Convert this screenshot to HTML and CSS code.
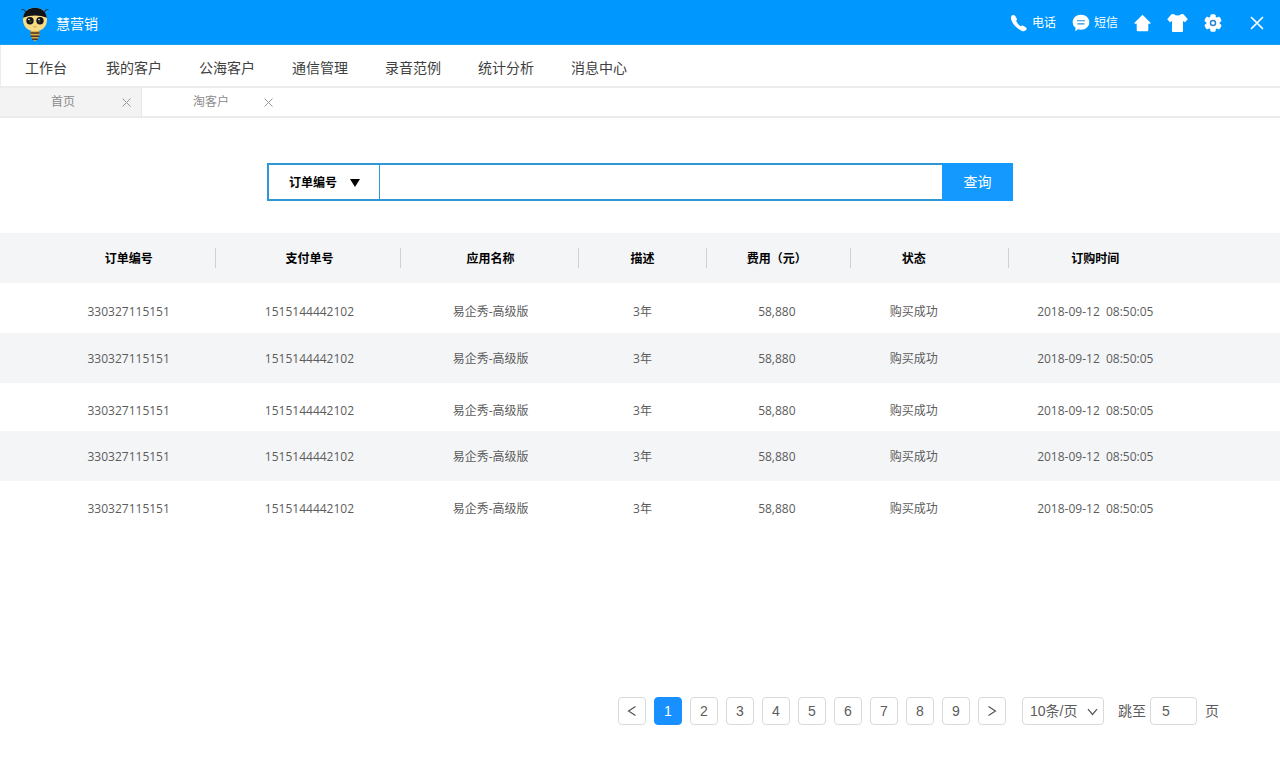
FILE: index.html
```html
<!DOCTYPE html>
<html lang="zh-CN">
<head>
<meta charset="utf-8">
<meta name="viewport" content="width=device-width, initial-scale=1">
<title>慧营销</title>
<link rel="stylesheet" href="styles.css">
</head>
<body>
<header class="topbar">
  <a class="brand" href="#">
    <svg class="brand-logo" viewBox="0 0 28 36" aria-hidden="true">
      <path d="M5 7Q3.500 2.500.8 3.800M23 7Q24.500 2.500 27.200 3.800" fill="none" stroke="#26405a" stroke-width="1.100" stroke-linecap="round"/>
      <path d="M10.200 23h7.600l.9 4q-.4 5-4.700 8.500q-4.300-3.500-4.700-8.500z" fill="#e0a83c"/>
      <path d="M9.500 27h9M9.700 30.200h8.600M11.200 33.200h5.600" stroke="#4a3424" stroke-width="1.400"/>
      <path d="M14 1.800c7 0 12 4.700 12 12C26 21 21 25.200 14 25.200S2 21 2 13.800C2 6.500 7 1.800 14 1.800z" fill="#f8dc84"/>
      <path d="M14 1.800c6.400 0 11.200 3.800 11.900 10Q20.500 9.600 14 9.600Q7.500 9.600 2.100 11.800C2.800 5.600 7.600 1.800 14 1.800z" fill="#111318"/>
      <circle cx="9" cy="14.800" r="3.700" fill="#15161b"/>
      <circle cx="19" cy="14.800" r="3.700" fill="#15161b"/>
      <circle cx="9.500" cy="15.500" r="1.100" fill="#54402f"/>
      <circle cx="18.500" cy="15.500" r="1.100" fill="#54402f"/>
      <circle cx="8" cy="13.500" r=".8" fill="#fff"/>
      <circle cx="18" cy="13.500" r=".8" fill="#fff"/>
      <path d="M12.500 20.500q1.500 1.200 3 0" fill="none" stroke="#b98a45" stroke-width=".8"/>
    </svg>
    <span>慧营销</span>
  </a>
  <div class="tools">
    <button class="tool" type="button">
      <svg width="18" height="18" viewBox="0 0 18 18" aria-hidden="true"><path d="M2.200 1.300C3.300.6 4.500.8 5.200 1.900L6.700 4.400C7.200 5.300 7 6 6.200 6.800C6.600 8.700 8.900 11.300 10.800 12.200C11.700 11.400 12.400 11.300 13.300 11.800L15.700 13.200C16.900 13.900 17 15.100 16.100 16.100C14.900 17.400 13.200 17.500 11.500 16.700C6.800 14.700 2.900 10.500 1.300 6C.6 4 .9 2.200 2.200 1.300z" fill="#fff"/></svg>
      <span>电话</span>
    </button>
    <button class="tool" type="button">
      <svg width="18" height="18" viewBox="0 0 18 18" aria-hidden="true"><path d="M9 .8c4.800 0 8.300 3.100 8.300 7.400s-3.500 7.500-8.300 7.500c-1 0-2-.1-2.900-.4L3.200 17.300l.4-3.500C1.800 12.500.7 10.500.7 8.200.7 3.900 4.200.8 9 .8z" fill="#fff"/><path d="M5 6.700h8M5.500 9.900h7" stroke="#2a8fdd" stroke-width="1.100"/></svg>
      <span>短信</span>
    </button>
    <button class="tool" type="button" aria-label="主页">
      <svg width="17" height="18" viewBox="0 0 17 18" aria-hidden="true"><path d="M8.500.8L16.500 8.700q.4.900-.5 1H14.300V16q0 1.200-1.200 1.200H3.900Q2.700 17.200 2.700 16V9.700H1q-.9-.1-.5-1z" fill="#fff"/></svg>
    </button>
    <button class="tool" type="button" aria-label="换肤">
      <svg width="21" height="20" viewBox="0 0 21 20" aria-hidden="true"><path d="M6.500 1Q10.500 4 14.500 1L16.500 1.300L20.800 6.300L18 9.300L16 8V18Q16 19 15 19H6Q5 19 5 18V8L3 9.300L.2 6.300L4.500 1.300z" fill="#fff"/></svg>
    </button>
    <button class="tool" type="button" aria-label="设置">
      <svg width="18" height="18" viewBox="0 0 18 18" aria-hidden="true"><g fill="#fff"><circle cx="9" cy="9" r="6.700"/><rect x="6.300" y=".2" width="5.400" height="17.600" rx="1.500"/><rect x="6.300" y=".2" width="5.400" height="17.600" rx="1.500" transform="rotate(60 9 9)"/><rect x="6.300" y=".2" width="5.400" height="17.600" rx="1.500" transform="rotate(120 9 9)"/></g><circle cx="9" cy="9" r="2.500" fill="#fff" stroke="#2b83cf" stroke-width="1.500"/></svg>
    </button>
    <button class="tool tool-close" type="button" aria-label="关闭">
      <svg width="14" height="14" viewBox="0 0 14 14" aria-hidden="true"><path d="M1.500 1.500l11 11M12.500 1.500l-11 11" stroke="#fff" stroke-width="1.700" stroke-linecap="round"/></svg>
    </button>
  </div>
</header>

<nav class="menu">
  <a href="#">工作台</a>
  <a href="#">我的客户</a>
  <a href="#">公海客户</a>
  <a href="#">通信管理</a>
  <a href="#">录音范例</a>
  <a href="#">统计分析</a>
  <a href="#">消息中心</a>
</nav>

<div class="tabs">
  <div class="tab tab-shaded">
    <a href="#">首页</a>
    <button type="button" aria-label="关闭首页"><svg width="9" height="9" viewBox="0 0 9 9" aria-hidden="true"><path d="M.5.5l8 8M8.500.5l-8 8" stroke="#999" stroke-width="1"/></svg></button>
  </div>
  <div class="tab">
    <a href="#">淘客户</a>
    <button type="button" aria-label="关闭淘客户"><svg width="9" height="9" viewBox="0 0 9 9" aria-hidden="true"><path d="M.5.5l8 8M8.500.5l-8 8" stroke="#999" stroke-width="1"/></svg></button>
  </div>
</div>

<main class="content">
  <form class="search">
    <div class="search-field">
      <select aria-label="查询字段">
        <option>订单编号</option>
        <option>支付单号</option>
      </select>
      <svg class="caret" width="10" height="8" viewBox="0 0 10 8" aria-hidden="true"><path d="M0 0h10L5 8z" fill="#000"/></svg>
    </div>
    <input class="search-input" type="text" aria-label="查询内容">
    <button class="search-button" type="button">查询</button>
  </form>

  <table class="orders">
    <colgroup>
      <col class="col-order"><col class="col-pay"><col class="col-app"><col class="col-desc"><col class="col-fee"><col class="col-state"><col class="col-time">
    </colgroup>
    <thead>
      <tr><th>订单编号</th><th>支付单号</th><th>应用名称</th><th>描述</th><th>费用（元）</th><th>状态</th><th>订购时间</th></tr>
    </thead>
    <tbody>
      <tr><td>330327115151</td><td>1515144442102</td><td>易企秀-高级版</td><td>3年</td><td>58,880</td><td>购买成功</td><td>2018-09-12&nbsp; 08:50:05</td></tr>
      <tr><td>330327115151</td><td>1515144442102</td><td>易企秀-高级版</td><td>3年</td><td>58,880</td><td>购买成功</td><td>2018-09-12&nbsp; 08:50:05</td></tr>
      <tr><td>330327115151</td><td>1515144442102</td><td>易企秀-高级版</td><td>3年</td><td>58,880</td><td>购买成功</td><td>2018-09-12&nbsp; 08:50:05</td></tr>
      <tr><td>330327115151</td><td>1515144442102</td><td>易企秀-高级版</td><td>3年</td><td>58,880</td><td>购买成功</td><td>2018-09-12&nbsp; 08:50:05</td></tr>
      <tr><td>330327115151</td><td>1515144442102</td><td>易企秀-高级版</td><td>3年</td><td>58,880</td><td>购买成功</td><td>2018-09-12&nbsp; 08:50:05</td></tr>
    </tbody>
  </table>

  <div class="pager">
    <div class="pages">
      <button type="button" aria-label="上一页"><svg width="10" height="12" viewBox="0 0 10 12" aria-hidden="true"><path d="M8.500 1.500L1.500 6l7 4.500" fill="none" stroke="#555" stroke-width="1.200"/></svg></button>
      <button type="button" class="current" aria-current="page">1</button>
      <button type="button">2</button>
      <button type="button">3</button>
      <button type="button">4</button>
      <button type="button">5</button>
      <button type="button">6</button>
      <button type="button">7</button>
      <button type="button">8</button>
      <button type="button">9</button>
      <button type="button" aria-label="下一页"><svg width="10" height="12" viewBox="0 0 10 12" aria-hidden="true"><path d="M1.500 1.500L8.500 6l-7 4.500" fill="none" stroke="#555" stroke-width="1.200"/></svg></button>
    </div>
    <div class="page-size">
      <select aria-label="每页条数">
        <option>10条/页</option>
        <option>20条/页</option>
      </select>
      <svg class="chevron" width="11" height="8" viewBox="0 0 11 8" aria-hidden="true"><path d="M1 1.200L5.500 6.500L10 1.200" fill="none" stroke="#555" stroke-width="1.200"/></svg>
    </div>
    <div class="jump">
      <label for="jump">跳至</label>
      <input id="jump" type="text" value="5">
      <span>页</span>
    </div>
  </div>
</main>
</body>
</html>
```
FILE: styles.css
```css
* {
  box-sizing: border-box;
}

body {
  margin: 0;
  min-height: 100vh;
  display: flex;
  flex-direction: column;
  background: #fff;
  color: #5c5c5c;
  font-family: "Open Sans", "Noto Sans CJK SC", sans-serif;
  font-size: 12px;
  line-height: 16px;
}

a {
  color: inherit;
  text-decoration: none;
}

button,
input,
select {
  margin: 0;
  padding: 0;
  border: 0;
  background: none;
  color: inherit;
  font: inherit;
  appearance: none;
}

button,
select {
  cursor: pointer;
}

svg {
  display: block;
  flex: none;
}

.topbar {
  display: flex;
  align-items: center;
  justify-content: space-between;
  height: 45px;
  padding: 2px 16px 0 21px;
  background: #0097ff;
  border-bottom: 1px solid #1e9fe8;
  color: #fff;
}

.brand {
  display: flex;
  align-items: center;
  gap: 7px;
  padding-top: 2px;
  font-size: 14px;
}

.brand-logo {
  width: 28px;
  height: 36px;
}

.tools {
  display: flex;
  align-items: center;
  gap: 16px;
}

.tool {
  display: flex;
  align-items: center;
  gap: 4px;
}

.tool-close {
  margin-left: 12px;
}

.menu {
  display: flex;
  align-items: center;
  gap: 37px;
  height: 41px;
  padding: 4px 24px 0;
  border-left: 1px solid #ececec;
  color: #404040;
  font-size: 14px;
  line-height: 20px;
}

.menu a:first-child {
  min-width: 44px;
}

.tabs {
  display: flex;
  height: 32px;
  border-top: 2px solid #ececec;
  border-bottom: 2px solid #ebebeb;
  color: #8c8c8c;
}

.tab {
  display: flex;
  align-items: center;
  justify-content: space-between;
  width: 141px;
  padding: 0 10px 0 51px;
}

.tab-shaded {
  width: 142px;
  background: #f3f3f3;
  border-right: 1px solid #e6e6e6;
}

.content {
  flex: 1;
  display: flex;
  flex-direction: column;
}

.search {
  display: flex;
  align-self: center;
  width: 100%;
  max-width: 746px;
  height: 38px;
  margin: 45px 0 32px;
  border: 2px solid #2f98d4;
  border-right: 0;
}

.search-field {
  position: relative;
  width: 111px;
  border-right: 1px solid #2f98d4;
}

.search-field select {
  width: 100%;
  height: 100%;
  padding: 2px 0 0 20px;
  color: #000;
  font-weight: 700;
}

.caret {
  position: absolute;
  top: 14px;
  right: 19px;
  pointer-events: none;
}

.search-input {
  flex: 1;
  min-width: 0;
  padding: 0 12px;
}

.search-button {
  width: 71px;
  margin: -2px 0;
  background: #149aff;
  color: #fff;
  font-size: 14px;
}

.orders {
  width: 100%;
  table-layout: fixed;
  border-collapse: collapse;
  text-align: center;
}

.col-order { width: 16.9%; }
.col-pay { width: 14.4%; }
.col-app { width: 13.9%; }
.col-desc { width: 10%; }
.col-fee { width: 11.3%; }
.col-state { width: 12.3%; }

.orders th,
.orders td {
  height: 50px;
  padding: 2px 0 0;
}

.orders tr > :nth-child(1) { padding-left: 41px; }
.orders tr > :nth-child(2) { padding-left: 2px; }
.orders tr > :nth-child(3) { padding-left: 2px; }
.orders tr > :nth-child(5) { padding-right: 4px; }
.orders tr > :nth-child(6) { padding-right: 32px; }
.orders tr > :nth-child(7) { padding-right: 98px; }

.orders thead,
.orders tbody tr:nth-child(even) {
  background: #f4f5f7;
}

.orders th {
  color: #000;
  font-weight: 700;
}

.orders th:not(:last-child) {
  background: linear-gradient(#cfd1d4, #cfd1d4) no-repeat right center / 1px 20px;
}

.orders tbody tr:nth-child(odd) td {
  padding-top: 8px;
}

.orders tbody tr:nth-child(3) td,
.orders tbody tr:nth-child(5) td {
  height: 48px;
}

.pager {
  display: flex;
  justify-content: flex-end;
  align-items: center;
  margin-top: auto;
  padding: 24px 61px 43px 24px;
  font-family: "Liberation Sans", "Noto Sans CJK SC", sans-serif;
  font-size: 14px;
}

.pages {
  display: flex;
  gap: 8px;
}

.pages button {
  display: flex;
  align-items: center;
  justify-content: center;
  width: 28px;
  height: 28px;
  border: 1px solid #d9d9d9;
  border-radius: 4px;
}

.pages .current {
  border-color: #1890ff;
  background: #1890ff;
  color: #fff;
}

.page-size {
  position: relative;
  margin: 0 14px 0 16px;
}

.page-size select {
  display: block;
  width: 82px;
  height: 28px;
  padding-left: 7px;
  border: 1px solid #d9d9d9;
  border-radius: 4px;
}

.chevron {
  position: absolute;
  top: 11px;
  right: 6px;
  pointer-events: none;
}

.jump {
  display: flex;
  align-items: center;
}

.jump input {
  width: 47px;
  height: 28px;
  margin: 0 8px 0 4px;
  padding: 0 11px;
  border: 1px solid #d9d9d9;
  border-radius: 4px;
}
```
